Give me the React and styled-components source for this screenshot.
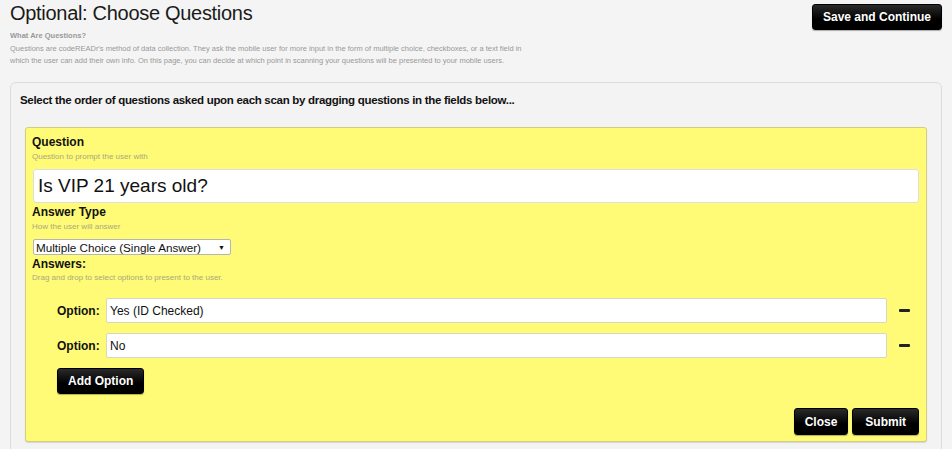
import styled, { createGlobalStyle } from "styled-components";

const Global = createGlobalStyle`
  body {
    margin: 0;
    background: #f4f4f4;
    font-family: "Liberation Sans", Arial, sans-serif;
    color: #222;
  }
`;

const Page = styled.div`
  padding: 0 10px;
  height: 449px;
  overflow: hidden;
`;

const Header = styled.div`
  display: flex;
  justify-content: space-between;
  align-items: flex-start;
`;

const Title = styled.h1`
  margin: 0;
  padding-top: 1px;
  font-size: 20px;
  letter-spacing: -0.3px;
  font-weight: normal;
  line-height: 24px;
  color: #1a1a1a;
`;

const InfoHead = styled.div`
  margin-top: 5px;
  font-size: 7.5px;
  font-weight: bold;
  color: #999;
  line-height: 12px;
`;

const InfoText = styled.p`
  margin: 1px 0 0;
  font-size: 7.5px;
  line-height: 12px;
  color: #999;
`;

const BlackButton = styled.button`
  background: linear-gradient(#2a2a2a, #000 60%);
  color: #fff;
  border: 1px solid #000;
  border-radius: 3px;
  font-family: "Liberation Sans", Arial, sans-serif;
  font-weight: bold;
  font-size: 12px;
  white-space: nowrap;
  height: ${(p) => p.$h || 27}px;
  padding: 0 ${(p) => p.$pad || 10}px;
  box-shadow: 0 1px 1px rgba(0, 0, 0, 0.3);
  cursor: pointer;
`;

const SaveButton = styled(BlackButton)`
  margin-top: 4px;
  width: 130px;
  flex-shrink: 0;
  padding: 0;
`;

const Panel = styled.div`
  margin-top: 15px;
  border: 1px solid #dcdcdc;
  border-radius: 6px;
  background: #f3f3f3;
  padding: 10px 14px 20px 9px;
`;

const PanelTitle = styled.div`
  font-size: 11.5px;
  letter-spacing: -0.3px;
  font-weight: bold;
  color: #111;
  line-height: 14px;
`;

const QuestionBox = styled.div`
  margin: 20px 0 0 5px;
  background: #fffb77;
  border: 1px solid #d2cd7f;
  border-radius: 3px;
  box-shadow: 0 1px 1px rgba(0, 0, 0, 0.12);
  padding: 7px 7px 6px 6px;
`;

const Label = styled.div`
  font-size: 12px;
  font-weight: bold;
  color: #111;
  line-height: 14px;
`;

const Hint = styled.div`
  font-size: 8px;
  color: #aaa87c;
  line-height: 10px;
  margin-top: ${(p) => p.$top ?? 3}px;
`;

const BigInput = styled.input`
  display: block;
  box-sizing: border-box;
  width: calc(100% - 1px);
  height: 34px;
  margin: 7px 0 0 1px;
  border: 1px solid #dedede;
  border-radius: 3px;
  background: #fff;
  font-family: "Liberation Sans", Arial, sans-serif;
  font-size: 19px;
  color: #111;
  padding: 0 4px;
  outline: none;
`;

const Section = styled.div`
  margin-top: ${(p) => p.$top || 0}px;
`;

const Select = styled.div`
  margin: 7px 0 0 1px;
  box-sizing: border-box;
  width: 198px;
  height: 16px;
  background: #fff;
  border: 1px solid #b5b5b5;
  border-radius: 2px;
  display: flex;
  align-items: center;
  justify-content: space-between;
  padding: 0 5px 0 2px;
  font-size: 11.7px;
  color: #111;
`;

const Caret = styled.span`
  font-size: 7px;
  color: #111;
`;

const Options = styled.div`
  margin-top: 15px;
  padding-left: 25px;
  display: flex;
  flex-direction: column;
  gap: 10px;
`;

const OptionRow = styled.div`
  display: flex;
  align-items: center;
`;

const OptionLabel = styled.span`
  width: 49px;
  font-size: 12px;
  font-weight: bold;
  color: #111;
`;

const OptionInput = styled.input`
  box-sizing: border-box;
  width: 781px;
  height: 25px;
  border: 1px solid #d8d8c0;
  border-radius: 2px;
  background: #fff;
  font-family: "Liberation Sans", Arial, sans-serif;
  font-size: 12px;
  color: #111;
  padding: 0 3px;
  outline: none;
`;

const Minus = styled.span`
  margin-left: 12px;
  width: 11px;
  height: 3px;
  background: #222;
  border-radius: 1px;
`;

const AddRow = styled.div`
  display: flex;
`;

const Footer = styled.div`
  display: flex;
  justify-content: flex-end;
  gap: 4px;
  margin-top: 14px;
`;

export default function App() {
  return (
    <Page>
      <Global />
      <Header>
        <div>
          <Title>Optional: Choose Questions</Title>
          <InfoHead>What Are Questions?</InfoHead>
          <InfoText>
            Questions are codeREADr's method of data collection. They ask the mobile user for more input in the form of multiple choice, checkboxes, or a text field in
            <br />
            which the user can add their own info. On this page, you can decide at which point in scanning your questions will be presented to your mobile users.
          </InfoText>
        </div>
        <SaveButton $h={26}>Save and Continue</SaveButton>
      </Header>
      <Panel>
        <PanelTitle>Select the order of questions asked upon each scan by dragging questions in the fields below...</PanelTitle>
        <QuestionBox>
          <Label>Question</Label>
          <Hint>Question to prompt the user with</Hint>
          <BigInput defaultValue="Is VIP 21 years old?" />
          <Section $top={2}>
            <Label>Answer Type</Label>
            <Hint>How the user will answer</Hint>
            <Select>
              Multiple Choice (Single Answer)
              <Caret>▼</Caret>
            </Select>
          </Section>
          <Section $top={2}>
            <Label>Answers:</Label>
            <Hint $top={2}>Drag and drop to select options to present to the user.</Hint>
          </Section>
          <Options>
            <OptionRow>
              <OptionLabel>Option:</OptionLabel>
              <OptionInput defaultValue="Yes (ID Checked)" />
              <Minus />
            </OptionRow>
            <OptionRow>
              <OptionLabel>Option:</OptionLabel>
              <OptionInput defaultValue="No" />
              <Minus />
            </OptionRow>
            <AddRow>
              <BlackButton $h={26}>Add Option</BlackButton>
            </AddRow>
          </Options>
          <Footer>
            <BlackButton>Close</BlackButton>
            <BlackButton $pad={12}>Submit</BlackButton>
          </Footer>
        </QuestionBox>
      </Panel>
    </Page>
  );
}
